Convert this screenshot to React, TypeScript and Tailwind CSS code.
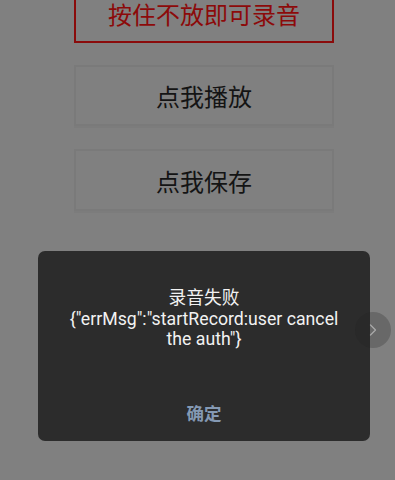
import { ChevronRight } from 'lucide-react';

const FONT = 'font-["Roboto","Noto_Sans_CJK_SC",sans-serif]';

const PageButton = ({ label, className }: { label: string; className: string }) => (
  <div
    className={`ml-[74px] w-[260px] flex items-center justify-center text-[24px] ${className}`}
  >
    <span className="pt-[5px]">{label}</span>
  </div>
);

const App = () => {
  return (
    <div className={`relative h-[480px] w-[395px] overflow-hidden bg-[#808080] ${FONT}`}>
      {/* page behind the mask */}
      <div className="flex flex-col">
        <PageButton
          label="按住不放即可录音"
          className="-mt-[17px] h-[60px] border-2 border-[#8a0b0b] text-[#8c0a0a]"
        />
        <PageButton
          label="点我播放"
          className="mt-[22px] h-[61px] border-2 border-[#7a7a7a] text-[#141414] shadow-[0_2px_0_#7c7c7c]"
        />
        <PageButton
          label="点我保存"
          className="mt-[23px] h-[62px] border-2 border-[#7a7a7a] text-[#141414] shadow-[0_2px_0_#7c7c7c]"
        />
      </div>

      {/* alert dialog */}
      <div className="absolute left-[38px] top-[251px] w-[332px] h-[190px] rounded-[7px] bg-[#2c2c2c] flex flex-col">
        <div className="pt-[37px] px-[22px] text-center text-[17.7px] leading-[20.5px] text-[#f2f2f2]">
          <div>录音失败</div>
          <div>{'{"errMsg":"startRecord:user cancel the auth"}'}</div>
        </div>
        <div className="mt-auto h-[57px] flex items-center justify-center pt-[3px]">
          <span className="text-[17.5px] font-bold text-[#8499b3]">确定</span>
        </div>
      </div>

      {/* floating side arrow */}
      <div className="absolute left-[355px] top-[312px] w-[36px] h-[36px] rounded-full bg-[rgba(30,30,30,0.25)] flex items-center justify-center">
        <ChevronRight className="w-[20px] h-[20px] text-[#a9a9a9]" strokeWidth={1.5} />
      </div>
    </div>
  );
};

export default App;
